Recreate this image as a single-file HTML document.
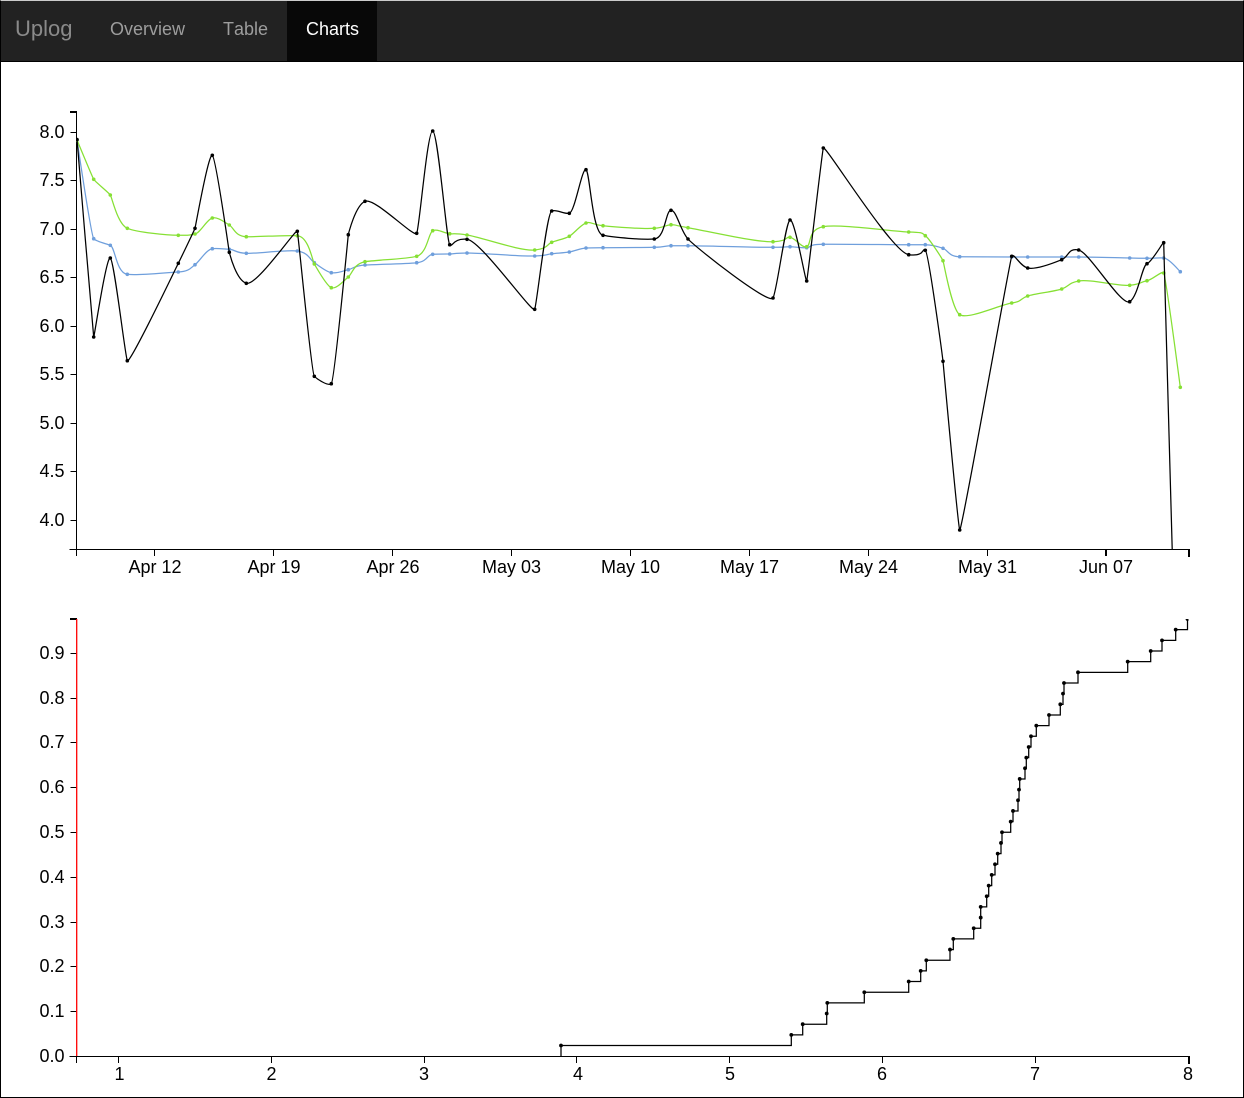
<!DOCTYPE html>
<html>
<head>
<meta charset="utf-8">
<title>Uplog Charts</title>
<style>
html,body{margin:0;padding:0;background:#fff;}
body{width:1244px;height:1098px;position:relative;overflow:hidden;font-family:"Liberation Sans",sans-serif;font-kerning:none;}
#frame{position:absolute;left:0;top:0;width:1242px;height:1097px;border:1px solid #000;border-top:0;}
#nav{position:absolute;left:0;top:0;width:1244px;height:61px;background:#222;border-top:1px solid #ccc;box-sizing:border-box;border-left:1px solid #000;border-right:1px solid #000;}
#navline{position:absolute;left:0;top:61px;width:1244px;height:1px;background:#000;}
.n{position:absolute;font-size:18px;line-height:20px;top:19px;color:#9d9d9d;white-space:nowrap;font-kerning:none;}
#active{position:absolute;left:287px;top:1px;width:90px;height:60px;background:#080808;}
svg{position:absolute;left:0;top:0;}
svg text{font-family:"Liberation Sans",sans-serif;font-size:18px;fill:#000;font-kerning:none;}
.ax{stroke:#000;stroke-width:1;shape-rendering:crispEdges;fill:none;}
.th{fill:#000;stroke:none;shape-rendering:crispEdges;}
.ln{fill:none;stroke-width:1.25;}
</style>
</head>
<body>
<div id="frame"></div>
<div id="nav"></div>
<div id="navline"></div>
<div id="active"></div>
<div class="n" style="left:15px;top:17px;font-size:22px;line-height:24px;color:#8a8a8a;">Uplog</div>
<div class="n" style="left:110px;">Overview</div>
<div class="n" style="left:223px;">Table</div>
<div class="n" style="left:306px;color:#fff;">Charts</div>

<svg width="1244" height="1098" viewBox="0 0 1244 1098" xmlns="http://www.w3.org/2000/svg">
<defs>
<clipPath id="c1"><rect x="76" y="112" width="1113" height="437"></rect></clipPath>
<clipPath id="c2"><rect x="76" y="619" width="1112.5" height="437"></rect></clipPath>
</defs>

<g class="ax">
<path d="M76.5 112.5V549.5"></path>
<path d="M70.5 132.5H76.5M70.5 180.5H76.5M70.5 229.5H76.5M70.5 277.5H76.5M70.5 326.5H76.5M70.5 374.5H76.5M70.5 423.5H76.5M70.5 471.5H76.5M70.5 520.5H76.5"></path>
<path d="M69.5 549.5H1190"></path>
<path d="M76.5 549.5V556M154.5 549.5V556M273.5 549.5V556M392.5 549.5V556M511.5 549.5V556M630.5 549.5V556M749.5 549.5V556M868.5 549.5V556M987.5 549.5V556"></path>
</g>
<rect class="th" x="70" y="111" width="7" height="2"></rect>
<rect class="th" x="1105" y="550" width="2" height="6"></rect>
<rect class="th" x="1188" y="550" width="2" height="7"></rect>
<g text-anchor="end">
<text x="64.5" y="138">8.0</text>
<text x="64.5" y="186">7.5</text>
<text x="64.5" y="235">7.0</text>
<text x="64.5" y="283">6.5</text>
<text x="64.5" y="332">6.0</text>
<text x="64.5" y="380">5.5</text>
<text x="64.5" y="429">5.0</text>
<text x="64.5" y="477">4.5</text>
<text x="64.5" y="526">4.0</text>
</g>
<g text-anchor="middle">
<text x="155" y="573">Apr 12</text>
<text x="274" y="573">Apr 19</text>
<text x="393" y="573">Apr 26</text>
<text x="511.5" y="573">May 03</text>
<text x="630.5" y="573">May 10</text>
<text x="749.5" y="573">May 17</text>
<text x="868.5" y="573">May 24</text>
<text x="987.5" y="573">May 31</text>
<text x="1106" y="573">Jun 07</text>
</g>
<g id="top" clip-path="url(#c1)"></g>

<g class="ax">
<path d="M70.5 653.5H76.5M70.5 698.5H76.5M70.5 742.5H76.5M70.5 787.5H76.5M70.5 832.5H76.5M70.5 877.5H76.5M70.5 922.5H76.5M70.5 966.5H76.5M70.5 1011.5H76.5M70.5 1056.5H76.5"></path>
<path d="M69.5 1056.5H1190"></path>
<path d="M76.5 1056.5V1063M118.5 1056.5V1063M271.5 1056.5V1063M424.5 1056.5V1063M576.5 1056.5V1063M729.5 1056.5V1063M882.5 1056.5V1063M1035.5 1056.5V1063"></path>
</g>
<rect class="th" x="70" y="618" width="7" height="2"></rect>
<rect class="th" x="1188" y="1057" width="2" height="7"></rect>
<path d="M76.7 619V1056" stroke="#f00" stroke-width="1.3" fill="none"></path>
<g text-anchor="end">
<text x="64.5" y="659">0.9</text>
<text x="64.5" y="704">0.8</text>
<text x="64.5" y="748">0.7</text>
<text x="64.5" y="793">0.6</text>
<text x="64.5" y="838">0.5</text>
<text x="64.5" y="883">0.4</text>
<text x="64.5" y="928">0.3</text>
<text x="64.5" y="972">0.2</text>
<text x="64.5" y="1017">0.1</text>
<text x="64.5" y="1062">0.0</text>
</g>
<g text-anchor="middle">
<text x="119.5" y="1080">1</text>
<text x="271.5" y="1080">2</text>
<text x="424" y="1080">3</text>
<text x="578" y="1080">4</text>
<text x="730" y="1080">5</text>
<text x="882" y="1080">6</text>
<text x="1035" y="1080">7</text>
<text x="1188" y="1080">8</text>
</g>
<g id="bot" clip-path="url(#c2)"></g>
</svg>

<script>
var X=[77,93.7,110.3,127.3,178.3,195,212.3,229.3,246.3,297.3,314.3,331.3,348.3,365,416.7,432.7,449.7,467,534.7,551.7,569.3,586,603,654.3,671,688,773,790,806.7,823.3,908.7,925.3,943,959.7,1011.7,1027.7,1061.7,1078.7,1129.7,1147,1163.7,1180.3];
var BL=[139.5,337,258,360.7,263.3,228.3,155.3,252.3,283.3,231.3,376.3,383.7,234.7,201.3,233.3,131,244.7,239.3,309.3,211,213.3,169.7,235.3,239,210.3,239,298,220,281,148,254.7,250.3,361.3,530,256.3,268,259.7,250,301.7,263.7,242.7,850];
var GR=[140,179.3,195,228.3,235.3,234,218,225,236.7,235.7,264,287.7,277,261.7,256.3,230.7,233.7,235,250,242.3,236.3,223,225.7,228.3,224.7,227.7,241.7,237.3,246.7,226.7,232,235.7,260.7,314.7,303,296,289,281,285.3,280.7,273,387.3];
var BU=[140,238.7,245.3,274.3,272,264.7,248.7,249.3,253.3,251,262.7,272.7,269.7,265,262.7,254.3,254,253,256,253.7,252,248,247.7,247.3,245.7,245.7,247.3,246.7,247.7,244.3,244.7,244.7,248.3,256.7,257,257,257,257,258,258.3,258,271.7];
var NS="http://www.w3.org/2000/svg";
function mono(xs,ys){
  var n=xs.length,j=n-1,m=[],i,d,a,b,s,prev;
  function sl(k){return (ys[k+1]-ys[k])/(xs[k+1]-xs[k]);}
  prev=sl(0);m[0]=prev;
  for(i=1;i<j;i++){var c=sl(i);m[i]=(prev+c)/2;prev=c;}
  m[j]=prev;
  for(i=0;i<j;i++){
    d=sl(i);
    if(Math.abs(d)<1e-6){m[i]=m[i+1]=0;}
    else{a=m[i]/d;b=m[i+1]/d;s=a*a+b*b;if(s>9){s=d*3/Math.sqrt(s);m[i]=s*a;m[i+1]=s*b;}}
  }
  var t=[];
  for(i=0;i<=j;i++){
    s=(xs[Math.min(j,i+1)]-xs[Math.max(0,i-1)])/(6*(1+m[i]*m[i]));
    t.push([s||0,m[i]*s||0]);
  }
  var p="M"+xs[0]+" "+ys[0];
  for(i=1;i<=j;i++){
    p+="C"+(xs[i-1]+t[i-1][0]).toFixed(2)+" "+(ys[i-1]+t[i-1][1]).toFixed(2)+" "+(xs[i]-t[i][0]).toFixed(2)+" "+(ys[i]-t[i][1]).toFixed(2)+" "+xs[i]+" "+ys[i];
  }
  return p;
}
function draw(g,d,col,xs,ys,r){
  var P=document.createElementNS(NS,"path");
  P.setAttribute("d",d);P.setAttribute("class","ln");P.setAttribute("stroke",col);
  g.appendChild(P);
  for(var i=0;i<xs.length;i++){
    var C=document.createElementNS(NS,"circle");
    C.setAttribute("cx",xs[i]);C.setAttribute("cy",ys[i]);C.setAttribute("r",r);C.setAttribute("fill",col);
    g.appendChild(C);
  }
}
var top_=document.getElementById("top");
draw(top_,mono(X,BU),"#6f9fdc",X,BU,1.8);
draw(top_,mono(X,GR),"#86e034",X,GR,1.8);
draw(top_,mono(X,BL),"#000",X,BL,1.8);
var SX=[561,791.3,802.7,826.7,827.3,864.3,908.7,920.7,926.3,950,953.3,973.7,980.7,980.7,986.7,988.7,991.7,995,997.7,1001,1002,1010.7,1013,1018,1019,1019.7,1025,1026.3,1028.7,1031,1036.3,1049,1060.3,1063,1064,1078,1127.7,1150.7,1162,1175.7,1187.5];
var SY=[],k,sd="";
for(k=0;k<SX.length;k++){SY.push(1056.2-(k+1)*10.663);}
sd="M"+SX[0]+" 1056V"+SY[0];
for(k=1;k<SX.length;k++){sd+="H"+SX[k]+"V"+SY[k];}
sd+="H1189";
draw(document.getElementById("bot"),sd,"#000",SX,SY,1.9);
</script>
</body>
</html>
